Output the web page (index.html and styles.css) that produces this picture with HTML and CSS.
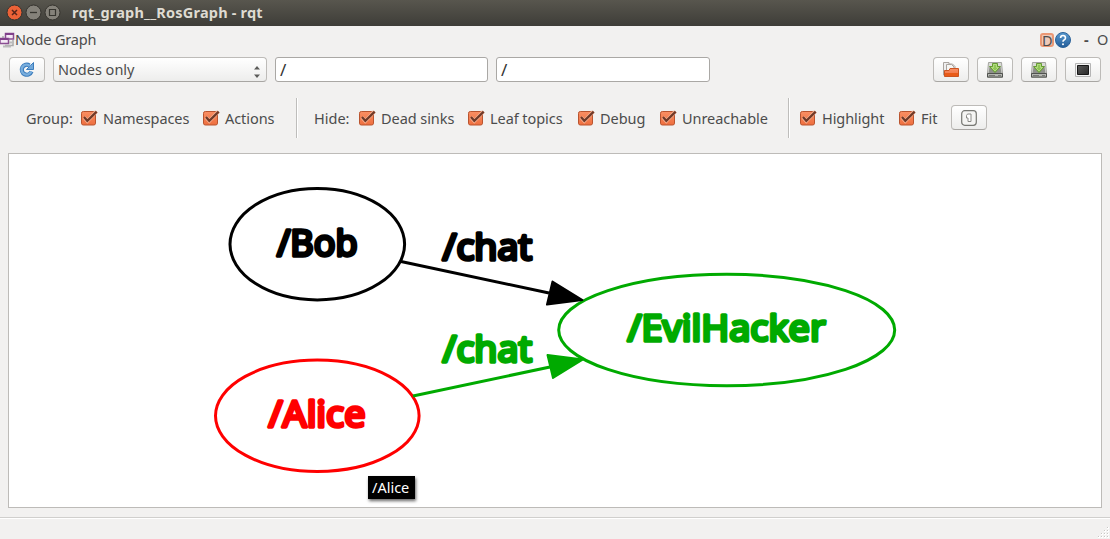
FILE: index.html
```
<!DOCTYPE html>
<html lang="en">
<head>
<meta charset="utf-8">
<title>rqt_graph__RosGraph - rqt</title>
<link rel="stylesheet" href="styles.css">
</head>
<body>
<svg width="0" height="0" class="defs">
  <defs>
    <linearGradient id="orange" x1="0" y1="0" x2="0" y2="1"><stop offset="0" stop-color="#f98f64"/><stop offset="1" stop-color="#ee6f3f"/></linearGradient>
    <linearGradient id="blue" x1="0" y1="0" x2="0" y2="1"><stop offset="0" stop-color="#5b9bd0"/><stop offset="1" stop-color="#225c98"/></linearGradient>
    <linearGradient id="dark" x1="0" y1="0" x2="1" y2="1"><stop offset="0" stop-color="#5a5a5a"/><stop offset="1" stop-color="#2a2a2a"/></linearGradient>
    <symbol id="check" viewBox="0 0 17 16">
      <rect x=".5" y="1.500" width="14" height="13.500" rx="1.800" fill="url(#orange)" stroke="#b9542f"/>
      <path d="M3 7.300 6.300 11 15.400 1.500" fill="none" stroke="#f9b394" stroke-width="3.600"/>
      <path d="M3 7 6.300 10.800 15.700 1.600" fill="none" stroke="#703a28" stroke-width="2.300"/>
    </symbol>
    <symbol id="save" viewBox="0 0 18 18">
      <path d="M2.500 1.500h13l1 10.500v4.500h-15V12z" fill="#d9dad6" stroke="#a3a49f"/>
      <path d="M3.500 6h11l1 6h-13z" fill="#8e908b"/>
      <path d="M1.500 12.500h15v3.500h-15z" fill="#b4b6b1" stroke="#50524f"/>
      <path d="M3 14.500h6M12 14.500h3" stroke="#777975"/>
      <path d="M6.500 2.500h5v3h3L9 11.500 3.500 5.500h3z" fill="#8fc556" stroke="#659b33"/>
      <path d="M7.500 3.500h3v3h2L9 10 5.500 6.500h2z" fill="none" stroke="#c1e58f" stroke-width=".7"/>
    </symbol>
  </defs>
</svg>
<header class="titlebar">
  <svg class="window-buttons" width="62" height="26" viewBox="0 0 62 26">
    <circle cx="14.500" cy="12.500" r="7.500" fill="#ec6237" stroke="#35332e"/>
    <path d="m12 10 5 5m0-5-5 5" stroke="#57251a" stroke-width="1.500"/>
    <circle cx="33.500" cy="12.500" r="7.500" fill="#85827a" stroke="#35332e"/>
    <path d="M30 12.500h7" stroke="#36352f" stroke-width="1.300"/>
    <circle cx="52.500" cy="12.500" r="7.500" fill="#85827a" stroke="#35332e"/>
    <path d="M49.500 9.500h6v6h-6z" fill="none" stroke="#36352f" stroke-width="1.200"/>
  </svg>
  <h1 class="title">rqt_graph__RosGraph - rqt</h1>
</header>
<section class="dock-title">
  <svg width="15" height="18" viewBox="0 0 15 18">
    <path d="M5 14.500h8V9M3 10V5" fill="none" stroke="#aaa" stroke-width="1.500"/>
    <path d="M5.500 2.500h8v5.500h-8zM0 7.500h8.500v5H0z" fill="#f4e9f5" stroke="#8a4d92" stroke-width="1.500"/>
    <path d="M5 3h9M0 8h8" stroke="#80408a" stroke-width="2"/>
    <path d="M3 15.500h8M9 11.500h4" stroke="#bbb" stroke-width="2"/>
  </svg>
  <span class="dock-name">Node Graph</span>
  <span class="badge">D</span>
  <svg class="help" width="16" height="16" viewBox="0 0 16 16">
    <circle cx="8" cy="8" r="7.500" fill="url(#blue)" stroke="#2b6299"/>
    <path d="M5.600 6Q5.600 3.500 8 3.500T10.500 6Q10.500 7.200 9 8 8 8.500 8 9.800" fill="none" stroke="#fff" stroke-width="1.600"/><circle cx="8" cy="12.200" r="1" fill="#fff"/>
  </svg>
  <b class="dash">-</b><span class="undock">O</span>
</section>
<section class="toolbar">
  <button class="tool refresh" aria-label="Refresh"><svg width="18" height="18" viewBox="0 0 18 18">
    <path d="M13.500 10.500A5 5 0 1 1 11.500 4.500" fill="none" stroke="#3c7dbd" stroke-width="4.200"/>
    <path d="M15.500 1.500v7h-7z" fill="#72a8d9" stroke="#3c7dbd"/>
    <path d="M13.200 10.500A5 5 0 1 1 12 5" fill="none" stroke="#79aedd" stroke-width="2.400"/>
  </svg></button>
  <div class="select"><span>Nodes only</span>
    <svg width="8" height="14" viewBox="0 0 8 14"><path d="M1 4.500 4 1l3 3.500zM1 9.500 4 13l3-3.500z" fill="#5b5b59"/></svg>
  </div>
  <div class="field first">/</div>
  <div class="field second">/</div>
  <button class="tool open" aria-label="Open"><svg width="18" height="18" viewBox="0 0 18 18">
    <path d="M1.500 14V1.500H7V3h3.500L13 5.500V14z" fill="#eee" stroke="#aaa49f"/><path d="M4.500 9V3.500h5L12 6v3" fill="#f6f6f4" stroke="#aaa49f"/>
    <path d="M2.500 15.500V9.500H7l1-2h8.500v8z" fill="url(#orange)" stroke="#cc5420"/><path d="M3 12h13v3H3z" fill="#e95b18"/>
  </svg></button>
  <button class="tool" aria-label="Save"><svg width="18" height="18"><use href="#save"/></svg></button>
  <button class="tool" aria-label="Save as SVG"><svg width="18" height="18"><use href="#save"/></svg></button>
  <button class="tool" aria-label="Save as image"><svg width="18" height="16" viewBox="0 0 18 16"><path d="M1.500 1.500h15v13h-15z" fill="#f5f5f5" stroke="#b5b5b5"/><path d="M3.500 3.500h11v9h-11z" fill="url(#dark)" stroke="#181818"/></svg></button>
</section>
<section class="filters">
  <span class="caption group">Group:</span>
  <label class="option namespaces"><svg width="17" height="16"><use href="#check"/></svg><span>Namespaces</span></label>
  <label class="option actions"><svg width="17" height="16"><use href="#check"/></svg><span>Actions</span></label>
  <i class="separator"></i>
  <span class="caption hide">Hide:</span>
  <label class="option sinks"><svg width="17" height="16"><use href="#check"/></svg><span>Dead sinks</span></label>
  <label class="option leaf"><svg width="17" height="16"><use href="#check"/></svg><span>Leaf topics</span></label>
  <label class="option debug"><svg width="17" height="16"><use href="#check"/></svg><span>Debug</span></label>
  <label class="option unreachable"><svg width="17" height="16"><use href="#check"/></svg><span>Unreachable</span></label>
  <i class="separator last"></i>
  <label class="option highlight"><svg width="17" height="16"><use href="#check"/></svg><span>Highlight</span></label>
  <label class="option fit"><svg width="17" height="16"><use href="#check"/></svg><span>Fit</span></label>
  <button class="tool" aria-label="Fit in view"><svg width="16" height="16" viewBox="0 0 16 16"><rect x=".7" y=".7" width="14.600" height="14.600" rx="3" fill="#f5f5f3" stroke="#777873" stroke-width="1.200"/><path d="M5.500 5.500Q6 4 7 4h3v7.500H7V8H5.500z" fill="#fff" stroke="#8b8b87"/></svg></button>
</section>
<main class="canvas">
  <svg class="graph" width="1092" height="353" viewBox="9 154 1092 353">
    <g fill="none" stroke-width="3">
      <ellipse cx="317.300" cy="244.200" rx="87.300" ry="55.700" stroke="#000"/>
      <ellipse cx="317.300" cy="415.800" rx="101.800" ry="55.700" stroke="#f00"/>
      <path d="M401 261.500 549 293" stroke="#000"/>
      <path d="M413 396 550 367" stroke="#00aa00"/>
      <ellipse cx="726.700" cy="330" rx="168" ry="55.700" stroke="#00aa00"/>
    </g>
    <path d="m552.500 281.500 30 18.500-35.500 4.500z" stroke="#000" stroke-width="2" stroke-linejoin="round"/>
    <path d="m547.500 355 35.500 4.500-30 18.500z" fill="#00aa00" stroke="#00aa00" stroke-width="2" stroke-linejoin="round"/>
    <g class="node-text">
      <text x="277" y="255.500" textLength="80.500" lengthAdjust="spacingAndGlyphs" fill="#000" stroke="#000">/Bob</text>
      <text x="442.500" y="260" textLength="89.500" lengthAdjust="spacingAndGlyphs" fill="#000" stroke="#000">/chat</text>
      <text x="442.500" y="361.500" textLength="89.500" lengthAdjust="spacingAndGlyphs" fill="#00aa00" stroke="#00aa00">/chat</text>
      <text x="627.500" y="341.300" textLength="198" lengthAdjust="spacingAndGlyphs" fill="#00aa00" stroke="#00aa00">/EvilHacker</text>
      <text x="268.500" y="427" textLength="97" lengthAdjust="spacingAndGlyphs" fill="#f00" stroke="#f00">/Alice</text>
    </g>
  </svg>
  <div class="tooltip">/Alice</div>
</main>
<footer class="status">
  <svg width="12" height="12" viewBox="0 0 12 12"><path d="M9 1h2M6 4h2m1 0h2M3 7h2m1 0h2m1 0h2M0 10h2m1 0h2m1 0h2m1 0h2" stroke="#fff" stroke-width="2"/><path d="M9 .5h1M6 3.500h1m2 0h1M3 6.500h1m2 0h1m2 0h1M0 9.500h1m2 0h1m2 0h1m2 0h1" stroke="#c8c7c4"/></svg>
</footer>
</body>
</html>
```
FILE: styles.css
```
* { box-sizing: border-box; }
body {
  margin: 0;
  width: 1110px;
  height: 539px;
  overflow: hidden;
  display: flex;
  flex-direction: column;
  background: #f2f1f0;
  color: #4c4c4c;
  font: 14.5px/20px "Noto Sans", "Open Sans", sans-serif;
  white-space: nowrap;
}
svg { display: block; flex: none; }
.defs { position: absolute; }
.titlebar {
  height: 26px;
  flex: none;
  display: flex;
  align-items: center;
  background: linear-gradient(#58564e, #3e3d38);
}
.window-buttons { margin-right: 10px; }
.title {
  margin: 0 0 2px;
  color: #dfdbd2;
  font-size: 14.5px;
  font-weight: 700;
  letter-spacing: .2px;
}
.dock-title { height: 27px; flex: none; display: flex; align-items: center; }
.dock-name, .undock, .dash { margin-bottom: 2px; }
.dock-name { width: 1025px; letter-spacing: -.15px; }
.badge {
  width: 14px;
  height: 14px;
  flex: none;
  border: 2px solid #ec9874;
  border-radius: 3px;
  background: #eec9ba;
  line-height: 10px;
  text-align: center;
}
.help { margin-left: 1px; }
.dash { margin-left: 13px; width: 13px; flex: none; }
.undock { flex: none; }
.toolbar { height: 33px; flex: none; display: flex; align-items: center; padding-left: 9px; }
.tool {
  width: 36px;
  height: 25px;
  flex: none;
  padding: 0;
  display: flex;
  justify-content: center;
  align-items: center;
  border: 1px solid #bdbbb8;
  border-bottom-color: #a8a6a3;
  border-radius: 4px;
  background: linear-gradient(#fff, #ededec);
}
.toolbar .tool { margin-right: 8px; }
.select {
  width: 214px;
  height: 25px;
  flex: none;
  padding: 0 5px 0 4px;
  display: flex;
  align-items: center;
  justify-content: space-between;
  border: 1px solid #bdbbb8;
  border-bottom-color: #a8a6a3;
  border-radius: 4px;
  background: linear-gradient(#fff, #ededec);
}
.select span { margin-bottom: 1px; }
.select svg { margin-top: 4px; }
.field {
  height: 25px;
  flex: none;
  padding-left: 4px;
  border: 1px solid #aaa8a5;
  border-radius: 3px;
  background: #fff;
  line-height: 24px;
  font-size: 17px;
  color: #333;
}
.first { width: 213px; margin-left: 8px; }
.second { width: 214px; margin-left: 8px; }
.open { margin-left: 223px; }
.filters { height: 67px; flex: none; display: flex; align-items: center; padding: 0 0 3px 26px; }
.caption, .option { flex: none; }
.option { display: flex; align-items: center; gap: 5px; }
.option span { letter-spacing: -.06px; }
.group { width: 55px; }
.namespaces { width: 122px; }
.actions { width: 93px; }
.separator { width: 2px; height: 40px; flex: none; border-left: 1px solid #bebdbb; background: #fff; }
.hide { width: 45px; margin-left: 16px; }
.sinks { width: 109px; }
.leaf { width: 110px; }
.debug { width: 82px; }
.unreachable { width: 128px; }
.last { margin-right: 10px; }
.highlight { width: 99px; }
.fit { width: 52px; }
.filters .tool { margin-bottom: 1px; }
.canvas {
  position: relative;
  width: 1094px;
  height: 355px;
  flex: none;
  margin-left: 8px;
  border: 1px solid #bdbbb8;
  background: #fff;
}
.node-text {
  font: 36px "Noto Sans", sans-serif;
  stroke-width: 3.4;
  stroke-linejoin: round;
}
.tooltip {
  position: absolute;
  left: 359px;
  top: 322px;
  width: 47px;
  height: 23px;
  padding-left: 4px;
  line-height: 23px;
  background: #000;
  color: #fff;
  font-size: 14.5px;
  box-shadow: 1px 2px 3px #0009;
}
.status {
  height: 22px;
  flex: none;
  margin-top: 9px;
  display: flex;
  justify-content: flex-end;
  align-items: flex-end;
  border-top: 1px solid #d0cfcd;
  box-shadow: inset 0 1px #fff;
}
```
